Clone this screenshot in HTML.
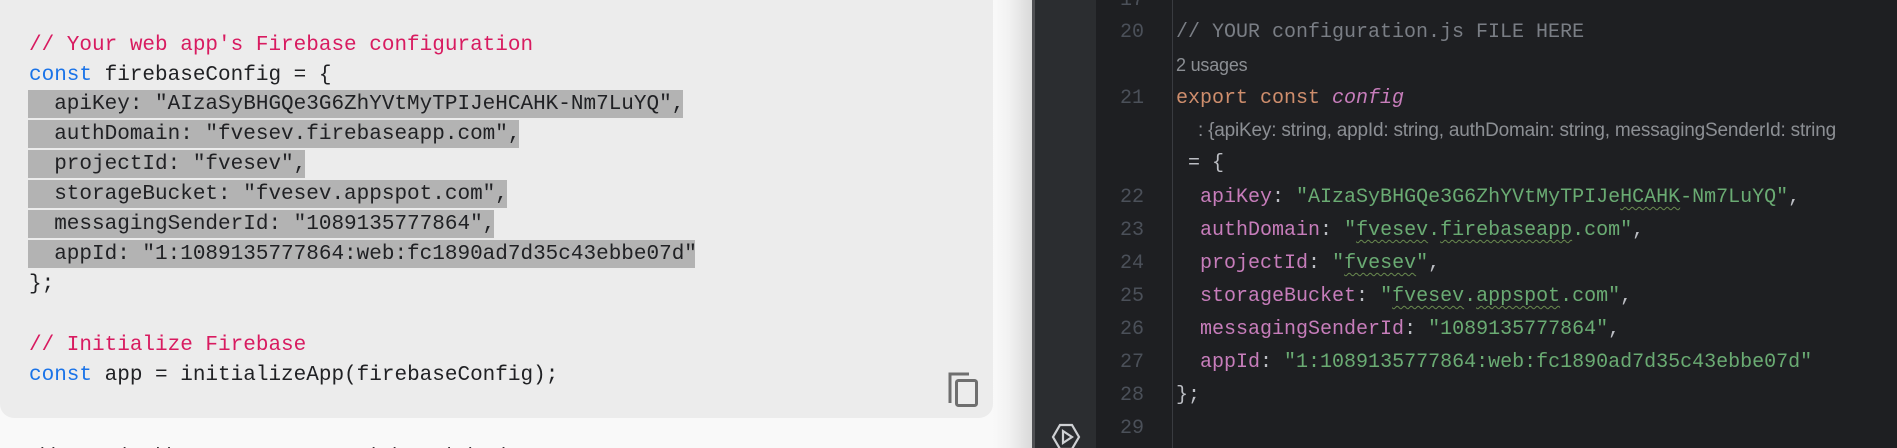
<!DOCTYPE html>
<html style="width:1897px;height:448px;overflow:hidden"><head><meta charset="utf-8"><style>
*{margin:0;padding:0;box-sizing:border-box}
body{width:1897px;height:448px;overflow:hidden;background:#f9f9f9;position:relative;font-family:"Liberation Mono",monospace}
#left{position:absolute;left:0;top:-20px;width:993px;height:438px;background:#ececec;border-radius:0 0 14px 14px}
.l{position:absolute;left:29px;font-size:21px;line-height:30px;height:30px;color:#202124;white-space:pre}
.hl{position:absolute;left:28px;height:28px;background:#b3b3b3}
.c{color:#d81b60}.k{color:#1a73e8}
#shadow{position:absolute;left:993px;top:0;width:40px;height:448px;background:linear-gradient(90deg,#f9f9f9,#f2f2f2 40%,#d8d8d8)}
#border{position:absolute;left:1032px;top:0;width:3px;height:448px;background:#505154}
#gutter{position:absolute;left:1035px;top:0;width:61px;height:448px;background:#2b2d30}
#ed{position:absolute;left:1096px;top:0;width:801px;height:448px;background:#1e1f22}
#sep{position:absolute;left:1172px;top:0;width:1px;height:448px;background:#393b40}
.n{position:absolute;left:1096px;width:48px;text-align:right;font-size:20px;color:#4b5059;line-height:33px}
.r{position:absolute;left:1176px;font-size:20px;color:#bcbec4;line-height:33px;white-space:pre}
.o{color:#cf8e6d}.p{color:#c77dbb}.s{color:#6aab73}.g{color:#7a7e85}
.w{text-decoration:underline wavy #6a8a4f;text-decoration-thickness:1px;text-underline-offset:4px}
.h{font-family:"Liberation Sans",sans-serif;color:#8c8f94;font-size:19px;letter-spacing:-0.2px}
#bot{position:absolute;left:0;top:440px;width:990px;height:8px;overflow:hidden}
</style></head><body>
<div id="left"></div>
<div class="hl" style="top:90px;width:655px"></div>
<div class="hl" style="top:120px;width:491px"></div>
<div class="hl" style="top:150px;width:277px"></div>
<div class="hl" style="top:180px;width:479px"></div>
<div class="hl" style="top:210px;width:466px"></div>
<div class="hl" style="top:240px;width:667px"></div>
<div class="l c" style="top:31px">// Your web app's Firebase configuration</div>
<div class="l" style="top:61px"><span class="k">const</span> firebaseConfig = {</div>
<div class="l" style="top:90px">  apiKey: "AIzaSyBHGQe3G6ZhYVtMyTPIJeHCAHK-Nm7LuYQ",</div>
<div class="l" style="top:120px">  authDomain: "fvesev.firebaseapp.com",</div>
<div class="l" style="top:150px">  projectId: "fvesev",</div>
<div class="l" style="top:180px">  storageBucket: "fvesev.appspot.com",</div>
<div class="l" style="top:210px">  messagingSenderId: "1089135777864",</div>
<div class="l" style="top:240px">  appId: "1:1089135777864:web:fc1890ad7d35c43ebbe07d"</div>
<div class="l" style="top:270px">};</div>
<div class="l c" style="top:331px">// Initialize Firebase</div>
<div class="l" style="top:361px"><span class="k">const</span> app = initializeApp(firebaseConfig);</div>
<svg style="position:absolute;left:947px;top:370px" width="34" height="38" viewBox="0 0 34 38" fill="none" stroke="#6f6f6f" stroke-width="3"><path d="M3 33V4h19"/><rect x="9.5" y="10.5" width="20" height="25" rx="2"/></svg>
<div id="bot"><div style="position:absolute;left:29px;top:6px;font-family:'Liberation Sans',sans-serif;font-size:20px;line-height:20px;color:#333;white-space:pre">  ld    t       l    dd                  t                 lt  l     t   l   l    d    t</div></div>
<div id="shadow"></div>
<div id="border"></div>
<div id="gutter"></div>
<div id="ed"></div>
<div id="sep"></div>
<div class="n" style="top:-16px">17</div>
<div class="n" style="top:16px">20</div>
<div class="n" style="top:82px">21</div>
<div class="n" style="top:181px">22</div>
<div class="n" style="top:214px">23</div>
<div class="n" style="top:247px">24</div>
<div class="n" style="top:280px">25</div>
<div class="n" style="top:313px">26</div>
<div class="n" style="top:346px">27</div>
<div class="n" style="top:379px">28</div>
<div class="n" style="top:412px">29</div>
<div class="r g" style="top:16px">// YOUR configuration.js FILE HERE</div>
<div class="r h" style="top:49px;font-size:18px">2 usages</div>
<div class="r" style="top:82px"><span class="o">export const </span><span class="p" style="font-style:italic">config</span></div>
<div class="r h" style="top:114px;left:1198px">: {apiKey: string, appId: string, authDomain: string, messagingSenderId: string</div>
<div class="r" style="top:147px"> = {</div>
<div class="r" style="top:181px">  <span class="p">apiKey</span>: <span class="s">"AIzaSyBHGQe3G6ZhYVtMyTPIJe<span class="w">HCAHK</span>-Nm7LuYQ"</span>,</div>
<div class="r" style="top:214px">  <span class="p">authDomain</span>: <span class="s">"<span class="w">fvesev</span>.<span class="w">firebaseapp</span>.com"</span>,</div>
<div class="r" style="top:247px">  <span class="p">projectId</span>: <span class="s">"<span class="w">fvesev</span>"</span>,</div>
<div class="r" style="top:280px">  <span class="p">storageBucket</span>: <span class="s">"<span class="w">fvesev</span>.<span class="w">appspot</span>.com"</span>,</div>
<div class="r" style="top:313px">  <span class="p">messagingSenderId</span>: <span class="s">"1089135777864"</span>,</div>
<div class="r" style="top:346px">  <span class="p">appId</span>: <span class="s">"1:1089135777864:web:fc1890ad7d35c43ebbe07d"</span></div>
<div class="r" style="top:379px">};</div>
<svg style="position:absolute;left:1051px;top:422px" width="30" height="26" viewBox="0 0 30 26" fill="none" stroke="#cfd1d4" stroke-width="2.2"><path d="M9 3h12l7 12-7 12H9L2 15z"/><path d="M12 9v12l9-6z"/></svg>
</body></html>
